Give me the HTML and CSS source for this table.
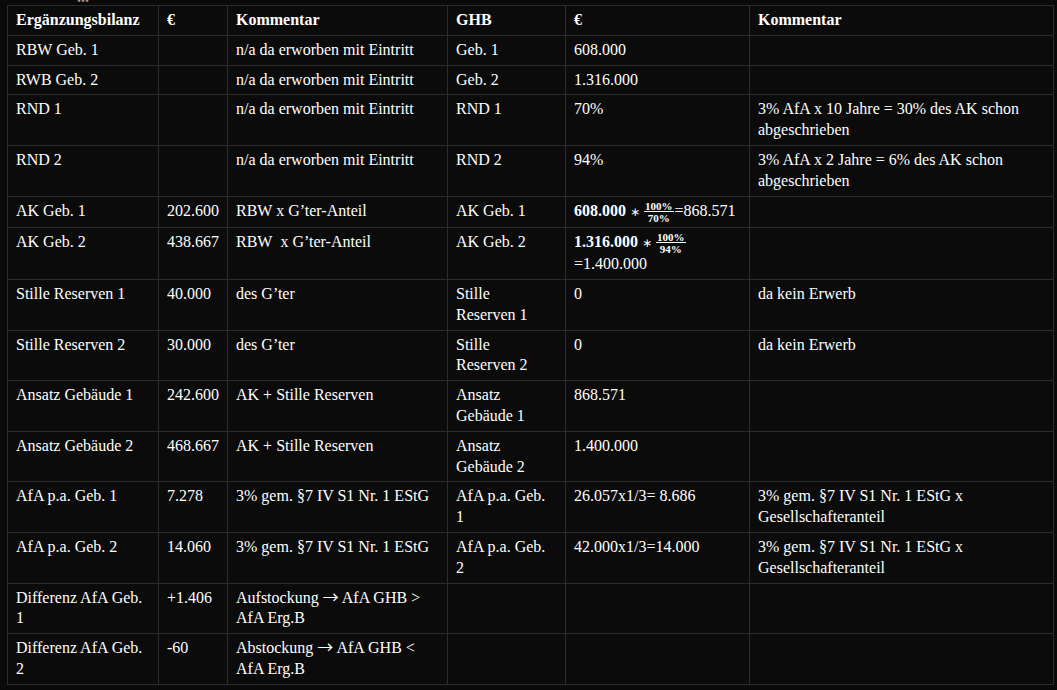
FILE: index.html
```html
<!DOCTYPE html>
<html lang="de">
<head>
<meta charset="utf-8">
<title>Ergänzungsbilanz</title>
<link rel="stylesheet" href="styles.css">
</head>
<body>
<div class="wrap">
  <span class="dots">...</span>
  <table class="bil">
    <colgroup>
      <col class="c1"><col class="c2"><col class="c3"><col class="c4"><col class="c5"><col class="c6">
    </colgroup>
    <thead>
      <tr><th>Ergänzungsbilanz</th><th>€</th><th>Kommentar</th><th>GHB</th><th>€</th><th>Kommentar</th></tr>
    </thead>
    <tbody>
      <tr><td>RBW Geb. 1</td><td></td><td>n/a da erworben mit Eintritt</td><td>Geb. 1</td><td>608.000</td><td></td></tr>
      <tr><td>RWB Geb. 2</td><td></td><td>n/a da erworben mit Eintritt</td><td>Geb. 2</td><td>1.316.000</td><td></td></tr>
      <tr><td>RND 1</td><td></td><td>n/a da erworben mit Eintritt</td><td>RND 1</td><td>70%</td><td>3% AfA x 10 Jahre = 30% des AK schon abgeschrieben</td></tr>
      <tr><td>RND 2</td><td></td><td>n/a da erworben mit Eintritt</td><td>RND 2</td><td>94%</td><td>3% AfA x 2 Jahre = 6% des AK schon abgeschrieben</td></tr>
      <tr><td>AK Geb. 1</td><td>202.600</td><td>RBW x G’ter-Anteil</td><td>AK Geb. 1</td><td><span class="m">608.000</span> <span class="op">∗</span> <span class="frac"><span class="num">100%</span><span class="den">70%</span></span>=868.571</td><td></td></tr>
      <tr><td>AK Geb. 2</td><td>438.667</td><td>RBW&nbsp; x G’ter-Anteil</td><td>AK Geb. 2</td><td><span class="m">1.316.000</span> <span class="op">∗</span> <span class="frac"><span class="num">100%</span><span class="den">94%</span></span><br>=1.400.000</td><td></td></tr>
      <tr><td>Stille Reserven 1</td><td>40.000</td><td>des G’ter</td><td>Stille Reserven 1</td><td>0</td><td>da kein Erwerb</td></tr>
      <tr><td>Stille Reserven 2</td><td>30.000</td><td>des G’ter</td><td>Stille Reserven 2</td><td>0</td><td>da kein Erwerb</td></tr>
      <tr><td>Ansatz Gebäude 1</td><td>242.600</td><td>AK + Stille Reserven</td><td>Ansatz Gebäude 1</td><td>868.571</td><td></td></tr>
      <tr><td>Ansatz Gebäude 2</td><td>468.667</td><td>AK + Stille Reserven</td><td>Ansatz Gebäude 2</td><td>1.400.000</td><td></td></tr>
      <tr><td>AfA p.a. Geb. 1</td><td>7.278</td><td>3% gem. §7 IV S1 Nr. 1 EStG</td><td>AfA p.a. Geb. 1</td><td>26.057x1/3= 8.686</td><td>3% gem. §7 IV S1 Nr. 1 EStG x Gesellschafteranteil</td></tr>
      <tr><td>AfA p.a. Geb. 2</td><td>14.060</td><td>3% gem. §7 IV S1 Nr. 1 EStG</td><td>AfA p.a. Geb. 2</td><td>42.000x1/3=14.000</td><td>3% gem. §7 IV S1 Nr. 1 EStG x Gesellschafteranteil</td></tr>
      <tr><td>Differenz AfA Geb. 1</td><td>+1.406</td><td>Aufstockung <span class="arr">→</span> AfA GHB &gt; AfA Erg.B</td><td></td><td></td><td></td></tr>
      <tr><td>Differenz AfA Geb. 2</td><td>-60</td><td>Abstockung <span class="arr">→</span> AfA GHB &lt; AfA Erg.B</td><td></td><td></td><td></td></tr>
    </tbody>
  </table>
</div>
</body>
</html>
```

FILE: styles.css
```css
html, body {
  margin: 0;
  background: #0a0a0a;
}

body {
  font-family: "Liberation Serif", "Times New Roman", serif;
  font-size: 16px;
  color: #ffffff;
}

.wrap {
  position: relative;
  padding: 5px 0 0 7px;
}

.dots {
  position: absolute;
  left: 77px;
  top: -12px;
  color: #9a9a9a;
  font-weight: bold;
  line-height: normal;
}

.bil {
  border-collapse: collapse;
  table-layout: fixed;
  width: 1046px;
  background: #0b0b0b;
}

.c1 { width: 151px; }
.c2 { width: 69px; }
.c3 { width: 220px; }
.c4 { width: 118px; }
.c5 { width: 184px; }
.c6 { width: 304px; }

.bil th,
.bil td {
  border: 1px solid #2c2c2c;
  padding: 4px 8px;
  line-height: 1.3;
  text-align: left;
  vertical-align: top;
}

.bil td:nth-child(4) {
  padding-right: 13px;
}

.bil th {
  font-weight: bold;
}

.m {
  font-weight: bold;
}

.op {
  font-family: "DejaVu Sans", sans-serif;
  font-size: 12px;
}

.arr {
  font-family: "Noto Sans CJK SC", "DejaVu Serif", serif;
  font-size: 16px;
  line-height: 1;
}

.frac {
  display: inline-flex;
  flex-direction: column;
  align-items: center;
  vertical-align: middle;
  font-size: 11px;
  font-weight: bold;
  line-height: 10px;
  margin: 0 1px 0 0;
}

.frac .num {
  padding: 0 1px;
  border-bottom: 1px solid #ffffff;
}

.frac .den {
  padding: 1px 1px 0;
}
```
